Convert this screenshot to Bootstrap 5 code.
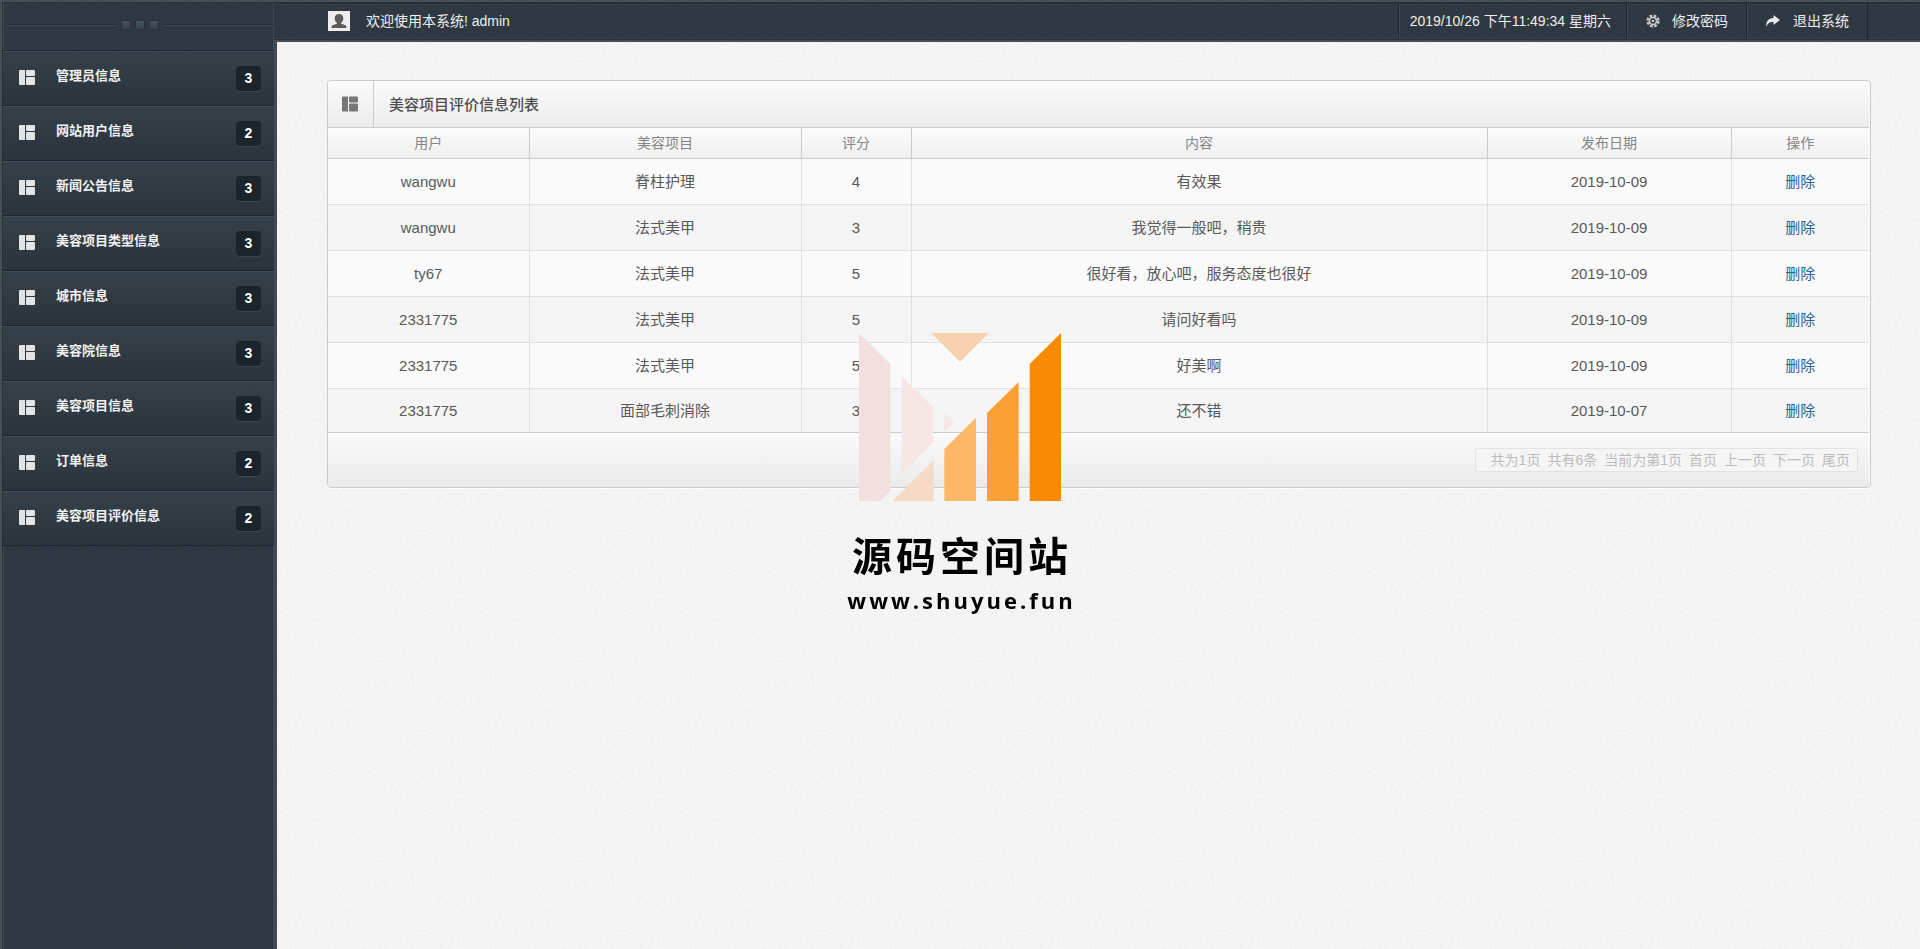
<!DOCTYPE html>
<html lang="zh-CN">
<head>
<meta charset="utf-8">
<meta name="viewport" content="width=device-width, initial-scale=1">
<title>美容项目评价信息列表</title>
<link href="https://cdn.jsdelivr.net/npm/bootstrap@5.3.0/dist/css/bootstrap.min.css" rel="stylesheet">
<style>
  :root { --edge: #454f56; --dark: #1d262e; --lite: #3d4a53; --base: #303943; --rule: #cbcbcb;
    --grain: url("data:image/svg+xml,%3Csvg xmlns='http://www.w3.org/2000/svg' width='200' height='200'%3E%3Cfilter id='n'%3E%3CfeTurbulence type='fractalNoise' baseFrequency='.4' numOctaves='2' stitchTiles='stitch'/%3E%3CfeColorMatrix values='0 0 0 0 0 0 0 0 0 0 0 0 0 0 0 .05 0 0 0 -.015'/%3E%3C/filter%3E%3Crect width='200' height='200' filter='url(%23n)'/%3E%3C/svg%3E"); }
  body { font-family: "Liberation Sans", "Noto Sans CJK SC", sans-serif; font-size: 15px; line-height: 20px; color: #595959; background: #f6f6f6 var(--grain); }
  a { text-decoration: none; }

  /* sidebar */
  .side { width: 274px; flex: none; background: var(--base) var(--grain); border-left: 2px solid var(--edge); border-top: 2px solid var(--edge); box-shadow: inset 1px 1px #27313a, inset 2px 0 var(--lite), inset -1px 0 var(--lite); }
  .side-top { height: 48px; padding: 0 0 2px 4px; gap: 6px; }
  .side-rule { height: 2px; background: linear-gradient(#252e36 50%, var(--lite) 50%); }
  .side-dot { width: 8px; height: 8px; background: linear-gradient(#46535c, #36444e); box-shadow: 0 0 0 1px #29323a; }
  .side-link { height: 55px; padding: 0 13px 0 16px; margin-left: 1px; gap: 21px; color: #f2f2f2; font-size: 13px; font-weight: 700; background: linear-gradient(#35414a, #2b333c); border-top: 1px solid var(--dark); box-shadow: inset 0 1px #414e57; }
  .side-link span { padding-bottom: 4px; }
  .side-link svg { margin-bottom: 2px; }
  .side-list { border-bottom: 1px solid var(--dark); }
  .side-count { width: 25px; height: 25px; line-height: 25px; border-radius: 4px; background: #1b242b; box-shadow: 0 1px #3a4751; color: #fff; font-size: 14px; }

  /* top bar */
  .topbar { height: 42px; padding: 0 52px 0 54px; color: #eee; font-size: 14px; background: var(--base) var(--grain); border-top: 2px solid var(--edge); border-bottom: 2px solid var(--edge); box-shadow: inset 0 2px #25303a, inset 0 3px #35424c, inset 0 -1px #25303a, inset 0 -2px #35424c; }
  .topbar .cell { height: 36px; padding: 0 18px; gap: 10px; color: #eee; font-size: 14px; border: 0; border-left: 1px solid var(--dark); background: none; box-shadow: inset 1px 0 var(--lite); }
  .topbar .cell:last-child { border-right: 1px solid var(--dark); }
  .topbar .clock { padding: 0 15px 0 11px; }
  .avatar { width: 22px; height: 20px; margin-right: 16px; }

  .work { border-left: 3px solid #3f4a53; padding: 38px 49px 38px 50px; }

  /* list panel */
  .panel { border: 1px solid var(--rule); border-radius: 4px; box-shadow: 0 1px #fff; padding-right: 1px; background: #fcfcfc; }
  .panel-head { height: 47px; background: linear-gradient(#fbfbfb, #ececec); border-bottom: 1px solid var(--rule); border-radius: 3px 3px 0 0; }
  .panel-head h1 { font-size: 15px; line-height: 20px; font-weight: 500; color: #4e4e4e; padding: 2px 0 0 15px; }
  .panel-icon { width: 46px; height: 46px; padding-right: 2px; border-right: 1px solid var(--rule); }
  .grid-table { table-layout: fixed; width: 100%; text-align: center; }
  .grid-table th { height: 30px; padding: 0; font-weight: 400; font-size: 14px; color: #858585; background: linear-gradient(#fbfbfb, #f0f0f0); border-right: 1px solid var(--rule); border-bottom: 1px solid var(--rule); }
  .grid-table td { height: 46px; padding: 1px 0 0; background: #fafafa; border-right: 1px solid #e0e0e0; border-bottom: 1px solid #e0e0e0; }
  .grid-table tr:nth-child(even) td { background: #f5f5f5; }
  .grid-table th:last-child, .grid-table td:last-child { border-right: 0; }
  .grid-table tbody tr:last-child td { border-bottom: 0; height: 44px; padding-top: 2px; }
  .grid-table a { color: #2a6496; }
  .panel-foot { height: 55px; padding-right: 11px; background: linear-gradient(#fafafa, #ebebeb); border-top: 1px solid var(--rule); border-radius: 0 0 3px 3px; }
  .pager { height: 24px; padding: 0 7px 0 15px; gap: 7px; font-size: 14px; color: #bbb; border: 1px solid #e2e2e2; background: #f5f5f5; border-radius: 2px; }
  .pager a { color: #bbb; }

  /* site mark laid over the page */
  .sitemark { position: fixed; inset: 0; pointer-events: none; color: #000; font-weight: 700; }
  .sitemark .zh { font-size: 40px; line-height: 48px; letter-spacing: 4px; padding-left: 4px; margin-top: 32px; }
  .sitemark .en { font-family: "Open Sans", "Noto Sans", sans-serif; font-weight: 700; font-size: 22px; line-height: 32px; letter-spacing: 3px; padding-left: 3px; margin-top: 3px; }
</style>
</head>
<body>
<svg class="d-none" xmlns="http://www.w3.org/2000/svg">
  <symbol id="tiles" viewBox="0 0 16 15"><path d="M1 0h5v15H1q-1 0-1-1V1q0-1 1-1zM8 0h7q1 0 1 1v4q0 1-1 1H8q-1 0-1-1V1q0-1 1-1zM8 7h7q1 0 1 1v6q0 1-1 1H8q-1 0-1-1V8q0-1 1-1z"/></symbol>
</svg>
<div class="d-flex min-vh-100">
  <aside class="side">
    <div class="side-top d-flex align-items-center">
      <div class="side-rule flex-fill"></div>
      <div class="side-dot"></div><div class="side-dot"></div><div class="side-dot"></div>
      <div class="side-rule flex-fill"></div>
    </div>
    <nav class="side-list" id="menu"></nav>
  </aside>
  <div class="flex-fill d-flex flex-column">
    <header class="topbar d-flex align-items-center">
      <svg class="avatar" viewBox="0 0 22 20"><path fill="#eee" d="M0 0h22v20H0z"/><path fill="#5d5d5d" d="M11 3c2.700 0 4.300 1.500 4.300 4.200 0 2-.8 3.600-2.100 4.500v1.100l4.300 1.500c.9.400 1 1.300 1 2.700h-15c0-1.400.1-2.300 1-2.700l4.300-1.500v-1.100C7.500 10.800 6.700 9.200 6.700 7.200 6.700 4.500 8.300 3 11 3z"/></svg>
      <span class="me-auto">欢迎使用本系统! admin</span>
      <span class="cell clock d-flex align-items-center">2019/10/26 下午11:49:34 星期六</span>
      <button class="cell d-flex align-items-center" type="button">
        <svg width="17" height="14" viewBox="0 0 17 14"><g fill="none" stroke="#c9c9c9"><circle cx="8" cy="7" r="3.500" stroke-width="1.600"/><circle cx="8" cy="7" r="5.400" stroke-width="2.400" stroke-dasharray="2.800 1.441"/></g><circle cx="8" cy="7" r="1.300" fill="#ccc"/></svg>修改密码</button>
      <button class="cell d-flex align-items-center" type="button">
        <svg width="18" height="14" viewBox="0 0 18 14"><path fill="#e8e8e8" d="M8.500 1 15 6l-6.500 5V8C5 7.900 2.500 9 1.500 13 .6 8 3 4.100 8.500 4z"/></svg>退出系统</button>
    </header>
    <main class="work flex-fill">
      <section class="panel">
        <div class="panel-head d-flex align-items-center">
          <div class="panel-icon d-flex align-items-center justify-content-center"><svg width="16" height="16" fill="#777"><use href="#tiles"/></svg></div>
          <h1 class="mb-0">美容项目评价信息列表</h1>
        </div>
        <table class="grid-table">
          <colgroup><col width="201"><col width="272"><col width="110"><col><col width="244"><col width="138"></colgroup>
          <thead><tr><th>用户</th><th>美容项目</th><th>评分</th><th>内容</th><th>发布日期</th><th>操作</th></tr></thead>
          <tbody>
            <tr><td>wangwu</td><td>脊柱护理</td><td>4</td><td>有效果</td><td>2019-10-09</td><td><a href="#">删除</a></td></tr>
            <tr><td>wangwu</td><td>法式美甲</td><td>3</td><td>我觉得一般吧，稍贵</td><td>2019-10-09</td><td><a href="#">删除</a></td></tr>
            <tr><td>ty67</td><td>法式美甲</td><td>5</td><td>很好看，放心吧，服务态度也很好</td><td>2019-10-09</td><td><a href="#">删除</a></td></tr>
            <tr><td>2331775</td><td>法式美甲</td><td>5</td><td>请问好看吗</td><td>2019-10-09</td><td><a href="#">删除</a></td></tr>
            <tr><td>2331775</td><td>法式美甲</td><td>5</td><td>好美啊</td><td>2019-10-09</td><td><a href="#">删除</a></td></tr>
            <tr><td>2331775</td><td>面部毛刺消除</td><td>3</td><td>还不错</td><td>2019-10-07</td><td><a href="#">删除</a></td></tr>
          </tbody>
        </table>
        <div class="panel-foot d-flex align-items-center justify-content-end">
          <div class="pager d-flex align-items-center"><span>共为1页</span><span>共有6条</span><span>当前为第1页</span><a href="#">首页</a><a href="#">上一页</a><a href="#">下一页</a><a href="#">尾页</a></div>
        </div>
      </section>
    </main>
  </div>
</div>
<div class="sitemark d-flex flex-column align-items-center justify-content-center">
  <svg width="202" height="168" viewBox="177 69 606 504">
    <path fill="#f2e0e1" d="M177 69l94 93v382l-30 29h-64z"/>
    <path fill="#f6e6e6" d="M305 199l94 93v105l-94 94zM433 309l29 28-29 28z"/>
    <path fill="#f8d1b0" d="M393 69h174l-87 87z"/>
    <path fill="#f7dac5" d="M401 451v122H277z"/>
    <path fill="#fcb767" d="M433 417l95-94v250h-95z"/>
    <path fill="#faa035" d="M561 309l95-93v357h-95z"/>
    <path fill="#f98a04" d="M689 162l94-93v504h-94z"/>
  </svg>
  <div class="zh">源码空间站</div>
  <div class="en">www.shuyue.fun</div>
</div>
<script src="https://cdn.jsdelivr.net/npm/bootstrap@5.3.0/dist/js/bootstrap.bundle.min.js"></script>
<script>
  const items = [["管理员信息",3],["网站用户信息",2],["新闻公告信息",3],["美容项目类型信息",3],["城市信息",3],["美容院信息",3],["美容项目信息",3],["订单信息",2],["美容项目评价信息",2]];
  document.getElementById("menu").innerHTML = items.map(([name, n]) =>
    `<a href="#" class="side-link d-flex align-items-center"><svg width="16" height="15" fill="#e4e4e4"><use href="#tiles"/></svg><span class="me-auto">${name}</span><b class="side-count text-center">${n}</b></a>`).join("");
</script>
</body>
</html>
